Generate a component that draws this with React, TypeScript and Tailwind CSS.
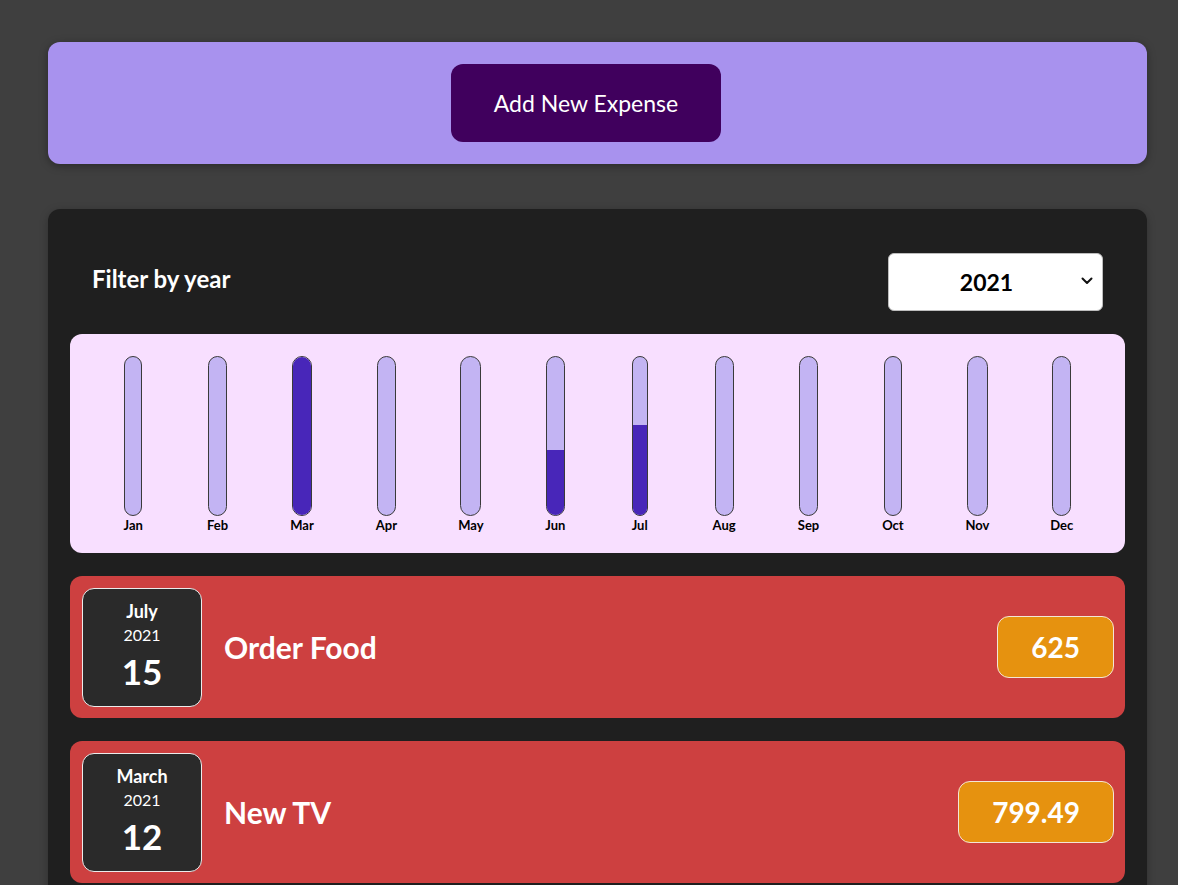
import React from "react";

const chartData = [
  { label: "Jan", fill: 0, width: "w-[18px]" },
  { label: "Feb", fill: 0, width: "w-[19px]" },
  { label: "Mar", fill: 100, width: "w-[20px]" },
  { label: "Apr", fill: 0, width: "w-[19px]" },
  { label: "May", fill: 0, width: "w-[21px]" },
  { label: "Jun", fill: 41, width: "w-[19px]" },
  { label: "Jul", fill: 57, width: "w-[16px]" },
  { label: "Aug", fill: 0, width: "w-[19px]" },
  { label: "Sep", fill: 0, width: "w-[19px]" },
  { label: "Oct", fill: 0, width: "w-[18px]" },
  { label: "Nov", fill: 0, width: "w-[21px]" },
  { label: "Dec", fill: 0, width: "w-[19px]" },
];

interface ExpenseProps {
  month: string;
  year: string;
  day: string;
  title: string;
  amount: string;
}

const expenses: ExpenseProps[] = [
  { month: "July", year: "2021", day: "15", title: "Order Food", amount: "625" },
  { month: "March", year: "2021", day: "12", title: "New TV", amount: "799.49" },
];

const ChartBar: React.FC<{ label: string; fill: number; width: string }> = ({
  label,
  fill,
  width,
}) => {
  return (
    <div className="flex flex-col items-center">
      <div
        className={`${width} h-[160px] rounded-full border border-[#3a3a3a] bg-[#c3b4f3] overflow-hidden flex flex-col justify-end`}
      >
        <div className="w-full bg-[#4826b9]" style={{ height: `${fill}%` }} />
      </div>
      <span className="mt-[1px] text-[13px] font-bold text-black leading-[16px]">
        {label}
      </span>
    </div>
  );
};

const ExpenseItem: React.FC<ExpenseProps> = ({ month, year, day, title, amount }) => {
  return (
    <div className="h-[142px] bg-[#cd4040] rounded-xl flex items-center pl-[12px] pr-[11px]">
      {/* date box */}
      <div className="w-[120px] h-[119px] bg-[#2a2a2a] border border-[#ececec] rounded-xl flex flex-col items-center justify-center text-white">
        <span className="text-[18px] font-bold leading-[24px]">{month}</span>
        <span className="text-[16px] leading-[24px]">{year}</span>
        <span className="text-[35px] font-bold leading-[48px]">{day}</span>
      </div>
      <h2 className="ml-[22px] flex-1 text-[30px] font-bold text-white">{title}</h2>
      <div className="h-[62px] px-[33px] bg-[#e6920f] border border-[#f3e6d6] rounded-xl flex items-center text-[28px] font-bold text-white">
        {amount}
      </div>
    </div>
  );
};

const App: React.FC = () => {
  return (
    <div className="min-h-screen bg-[#3f3f3f] pt-[42px] pl-[48px] font-['Lato',sans-serif]">
      {/* New expense panel */}
      <div className="w-[1099px] h-[122px] bg-[#a892ee] rounded-xl shadow-[0_2px_8px_rgba(0,0,0,0.35)] flex items-center justify-center">
        <button className="mr-[23px] w-[270px] h-[78px] bg-[#40005d] rounded-xl text-white text-[23px]">
          Add New Expense
        </button>
      </div>

      {/* Expenses list */}
      <div className="mt-[45px] w-[1099px] bg-[#1f1f1f] rounded-xl p-[22px] flex flex-col gap-[23px] shadow-[0_2px_8px_rgba(0,0,0,0.25)]">
        <div className="pt-[22px] px-[22px] flex items-center justify-between">
          <label className="mb-[6px] text-[24px] font-bold text-white">Filter by year</label>
          <div className="relative w-[215px] h-[58px]">
            <select
              defaultValue="2021"
              className="appearance-none w-full h-full bg-white rounded-md border border-[#bdbdbd] text-[23px] font-bold text-black text-center pr-[26px] pl-[8px]"
            >
              <option value="2022">2022</option>
              <option value="2021">2021</option>
              <option value="2020">2020</option>
              <option value="2019">2019</option>
            </select>
            <svg
              className="pointer-events-none absolute right-[10px] top-[24px]"
              width="12"
              height="8"
              viewBox="0 0 12 8"
              fill="none"
            >
              <path d="M1.5 1.5 L6 6 L10.5 1.5" stroke="#111" strokeWidth="2" strokeLinecap="round" strokeLinejoin="round" />
            </svg>
          </div>
        </div>

        {/* Chart */}
        <div className="h-[219px] bg-[#f8dfff] rounded-xl pt-[22px] px-[21px] grid grid-cols-12">
          {chartData.map((bar) => (
            <ChartBar key={bar.label} label={bar.label} fill={bar.fill} width={bar.width} />
          ))}
        </div>

        {expenses.map((item, index) => (
          <ExpenseItem key={index} {...item} />
        ))}
      </div>
    </div>
  );
};

export default App;
